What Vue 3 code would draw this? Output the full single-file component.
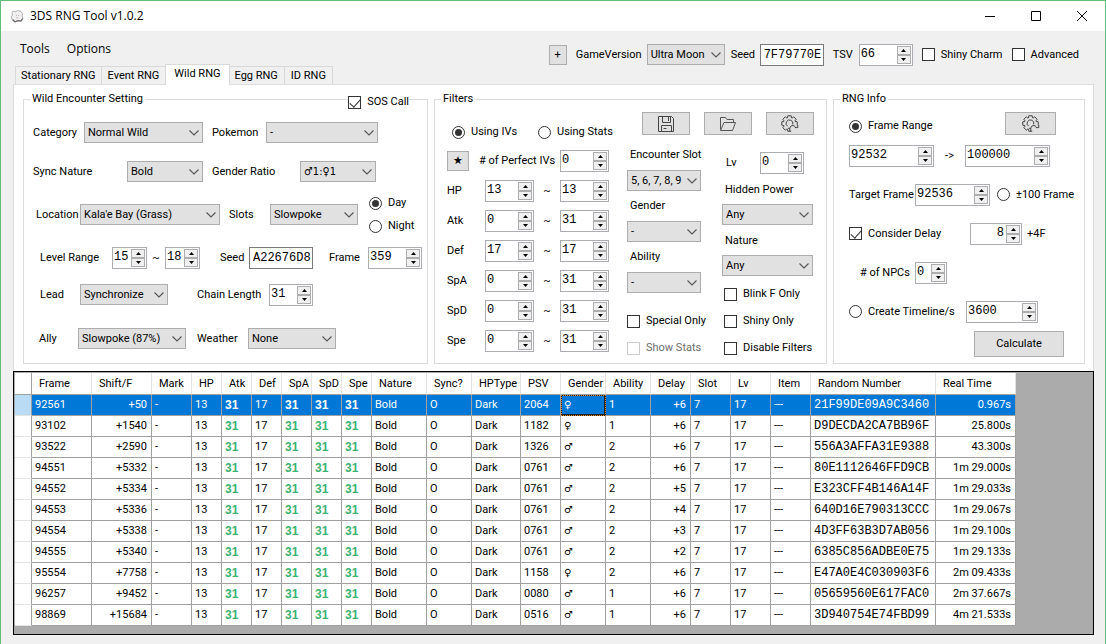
<script setup>
import { h, ref } from 'vue'

const Sel = ({ options, label, id }) =>
  h('span', { class: 'sel' }, [
    h('select', { id, 'aria-label': label }, options.map(o => h('option', o))),
    h('svg', { viewBox: '0 0 10 6', width: 10, height: 6, 'aria-hidden': 'true' }, [
      h('path', { d: 'M0.5 0.5 L5 5 L9.5 0.5', fill: 'none', stroke: '#555', 'stroke-width': 1.1 })
    ])
  ])
Sel.props = ['options', 'label', 'id']

const arrow = (up) =>
  h('svg', { viewBox: '0 0 5 3', width: 5, height: 3, 'aria-hidden': 'true' }, [
    h('path', { d: up ? 'M0 3 L2.5 0 L5 3Z' : 'M0 0 L2.5 3 L5 0Z', fill: '#000' })
  ])

const Spin = ({ value, label, id, end }) =>
  h('span', { class: ['spin', { end }] }, [
    h('input', { type: 'text', inputmode: 'numeric', value, id, 'aria-label': label }),
    h('span', { class: 'steps' }, [
      h('button', { type: 'button', tabindex: -1, 'aria-label': 'Increase ' + label }, [arrow(true)]),
      h('button', { type: 'button', tabindex: -1, 'aria-label': 'Decrease ' + label }, [arrow(false)])
    ])
  ])
Spin.props = ['value', 'label', 'id', 'end']

const gearPath = (() => {
  const pts = []
  for (let i = 0; i < 8; i++) {
    const a = (i * Math.PI) / 4
    for (const [r, d] of [[6, -0.34], [7.9, -0.22], [7.9, 0.22], [6, 0.34]]) {
      pts.push((8.5 + r * Math.sin(a + d)).toFixed(2) + ' ' + (8.5 - r * Math.cos(a + d)).toFixed(2))
    }
  }
  return 'M' + pts.slice(0, 11).join(' L') + ' M' + pts.slice(17).join(' L') + ' L' + pts[0]
})()

const Gear = () =>
  h('svg', { viewBox: '0 0 18 18', width: 18, height: 18, fill: 'none', stroke: '#444', 'stroke-width': 1, 'aria-hidden': 'true' }, [
    h('path', { d: gearPath }),
    h('path', { d: 'M6.6 11.2 A3.4 3.4 0 1 1 11.7 9.4' }),
    h('path', { d: 'M8.8 16.6 V13.4 A3 3 0 0 1 14.4 12 M16.8 10 V12.6 H13.8 M8.8 13.6 L7 13.2' })
  ])

const tabs = ['Stationary RNG', 'Event RNG', 'Wild RNG', 'Egg RNG', 'ID RNG']
const activeTab = ref('Wild RNG')

const stats = [
  ['HP', 13, 13],
  ['Atk', 0, 31],
  ['Def', 17, 17],
  ['SpA', 0, 31],
  ['SpD', 0, 31],
  ['Spe', 0, 31]
]

const columns = [
  ['Frame', 60], ['Shift/F', 60, 'num'], ['Mark', 40], ['HP', 30], ['Atk', 30, 'best'], ['Def', 30],
  ['SpA', 30, 'best'], ['SpD', 30, 'best'], ['Spe', 30, 'best'], ['Nature', 55], ['Sync?', 45],
  ['HPType', 49], ['PSV', 40], ['Gender', 45, 'sex'], ['Ability', 45], ['Delay', 40, 'num'], ['Slot', 40],
  ['Lv', 40], ['Item', 40], ['Random Number', 125, 'hex'], ['Real Time', 80, 'num']
]

const results = [
  ['92561', '+50', '2064', '♀', 1, '+6', '21F99DE09A9C3460', '0.967s'],
  ['93102', '+1540', '1182', '♀', 1, '+6', 'D9DECDA2CA7BB96F', '25.800s'],
  ['93522', '+2590', '1326', '♂', 2, '+6', '556A3AFFA31E9388', '43.300s'],
  ['94551', '+5332', '0761', '♂', 2, '+6', '80E1112646FFD9CB', '1m 29.000s'],
  ['94552', '+5334', '0761', '♂', 2, '+5', 'E323CFF4B146A14F', '1m 29.033s'],
  ['94553', '+5336', '0761', '♂', 2, '+4', '640D16E790313CCC', '1m 29.067s'],
  ['94554', '+5338', '0761', '♂', 2, '+3', '4D3FF63B3D7AB056', '1m 29.100s'],
  ['94555', '+5340', '0761', '♂', 2, '+2', '6385C856ADBE0E75', '1m 29.133s'],
  ['95554', '+7758', '1158', '♀', 2, '+6', 'E47A0E4C030903F6', '2m 09.433s'],
  ['96257', '+9452', '0080', '♂', 1, '+6', '05659560E617FAC0', '2m 37.667s'],
  ['98869', '+15684', '0516', '♂', 1, '+6', '3D940754E74FBD99', '4m 21.533s']
]
const rows = results.map(([frame, shift, psv, sex, ability, delay, rand, time]) => [
  frame, shift, '-', 13, 31, 17, 31, 31, 31, 'Bold', 'O', 'Dark', psv, sex, ability, delay, 7, 17, '---', rand, time
])
</script>

<template>
  <div class="window">
    <header class="titlebar">
      <svg class="logo" viewBox="0 0 14 14" width="14" height="14" aria-hidden="true">
        <path d="M3 2 L5 3 L8 1.5 L11 2.5 L12.5 5 L12 7 L13 9 L11 12 L8 11.5 L5 13 L2.5 11 L1 8 L2.5 6 L2 4Z" fill="#f1f1f1" stroke="#b5b5b5" stroke-width="1" />
        <path d="M2.5 10.5 L5 12.8 L8 11.6 L11 12 L12.6 9.5" fill="none" stroke="#6f6a6a" stroke-width="1.2" />
        <path d="M6 6.5 H7 M8 6.5 H9 M6 8.8 H8.5" stroke="#c8b4b4" stroke-width="1" />
      </svg>
      <h1>3DS RNG Tool v1.0.2</h1>
      <div class="caption">
        <button type="button" aria-label="Minimize"><svg viewBox="0 0 10 10" width="10" height="10"><path d="M0 5.5H10" stroke="#000" /></svg></button>
        <button type="button" aria-label="Maximize"><svg viewBox="0 0 10 10" width="10" height="10"><path d="M.5 .5H9.5V9.5H.5Z" fill="none" stroke="#000" /></svg></button>
        <button type="button" aria-label="Close"><svg viewBox="0 0 10 10" width="10" height="10"><path d="M0 0L10 10M10 0L0 10" stroke="#000" /></svg></button>
      </div>
    </header>

    <div class="top">
      <div class="nav">
        <nav class="menu">
          <button type="button">Tools</button>
          <button type="button">Options</button>
        </nav>
        <div class="tabs" role="tablist">
          <button
            v-for="t in tabs" :key="t" type="button" role="tab"
            :aria-selected="t === activeTab" :class="{ active: t === activeTab }"
            @click="activeTab = t"
          >{{ t }}</button>
        </div>
      </div>
      <div class="toolbar">
        <button type="button" class="btn plus" aria-label="Add">+</button>
        <label class="pair version">GameVersion <Sel label="Game version" :options="['Ultra Moon']" /></label>
        <label class="pair gseed">Seed <input class="hex-input" type="text" value="7F79770E"></label>
        <label class="pair tsv">TSV <Spin label="TSV" value="66" /></label>
        <label class="tick"><input type="checkbox">Shiny Charm</label>
        <label class="tick"><input type="checkbox">Advanced</label>
      </div>
    </div>

    <main class="page">
      <fieldset class="wild">
        <legend>Wild Encounter Setting</legend>
        <label class="tick sos"><input type="checkbox" checked>SOS Call</label>
        <div class="row r1">
          <label class="pair category">Category <Sel label="Category" :options="['Normal Wild']" /></label>
          <label class="pair pokemon">Pokemon <Sel label="Pokemon" :options="['-']" /></label>
        </div>
        <div class="row r2">
          <label class="pair sync">Sync Nature <Sel label="Sync nature" :options="['Bold']" /></label>
          <label class="pair ratio">Gender Ratio <Sel label="Gender ratio" :options="['♂1:♀1']" /></label>
        </div>
        <div class="row r3">
          <label class="pair location">Location <Sel label="Location" :options="['Kala\'e Bay (Grass)']" /></label>
          <label class="pair slots">Slots <Sel label="Slots" :options="['Slowpoke']" /></label>
          <div class="daynight">
            <label class="tick"><input type="radio" name="time" checked>Day</label>
            <label class="tick"><input type="radio" name="time">Night</label>
          </div>
        </div>
        <div class="row r4">
          <div class="pair level">
            <label for="lv-min">Level Range</label>
            <Spin id="lv-min" label="Minimum level" value="15" />
            <span class="to">~</span>
            <Spin label="Maximum level" value="18" />
          </div>
          <label class="pair wseed">Seed <input class="hex-input" type="text" value="A22676D8"></label>
          <label class="pair wframe">Frame <Spin label="Frame" value="359" /></label>
        </div>
        <div class="row r5">
          <label class="pair lead">Lead <Sel label="Lead" :options="['Synchronize']" /></label>
          <label class="pair chain">Chain Length <Spin label="Chain length" value="31" /></label>
        </div>
        <div class="row r6">
          <label class="pair ally">Ally <Sel label="Ally" :options="['Slowpoke (87%)']" /></label>
          <label class="pair weather">Weather <Sel label="Weather" :options="['None']" /></label>
        </div>
      </fieldset>

      <fieldset class="filters">
        <legend>Filters</legend>
        <div class="ivs">
          <div class="modes">
            <label class="tick"><input type="radio" name="mode" checked>Using IVs</label>
            <label class="tick"><input type="radio" name="mode">Using Stats</label>
          </div>
          <div class="perfect">
            <button type="button" class="btn star" aria-label="Favourite">★</button>
            <label for="perfect"># of Perfect IVs</label>
            <Spin id="perfect" label="Number of perfect IVs" value="0" />
          </div>
          <div v-for="[name, lo, hi] in stats" :key="name" class="stat">
            <label :for="'min-' + name">{{ name }}</label>
            <Spin :id="'min-' + name" :label="name + ' minimum'" :value="lo" />
            <span class="to">~</span>
            <Spin :label="name + ' maximum'" :value="hi" />
          </div>
        </div>
        <div class="more">
          <div class="files">
            <button type="button" class="btn" aria-label="Save filters">
              <svg viewBox="0 0 18 18" width="18" height="18" fill="none" stroke="#444" aria-hidden="true">
                <path d="M1.5 1.5H14.5L16.5 3.5V16.5H1.5ZM5.5 1.5V7.5H13.5V1.5M11.5 2V6M4.5 16.5V10.5H14.5V16.5M6.5 13.5H9.5" />
              </svg>
            </button>
            <button type="button" class="btn" aria-label="Open filters">
              <svg viewBox="0 0 18 18" width="18" height="18" fill="none" stroke="#555" aria-hidden="true">
                <path d="M1.5 14.5V2.5H6.5L8 4.5H14.5V7.5M1.5 15.5L5 7.5H16.5L13.5 15.5Z" />
              </svg>
            </button>
            <button type="button" class="btn" aria-label="Reset filters"><Gear /></button>
          </div>
          <div class="choices">
            <div class="stack mid">
              <label class="over">Encounter Slot <Sel label="Encounter slot" :options="['5, 6, 7, 8, 9']" /></label>
              <label class="over">Gender <Sel label="Gender" :options="['-']" /></label>
              <label class="over">Ability <Sel label="Ability" :options="['-']" /></label>
              <div class="checks">
                <label class="tick"><input type="checkbox">Special Only</label>
                <label class="tick off"><input type="checkbox" disabled>Show Stats</label>
              </div>
            </div>
            <div class="stack side">
              <label class="pair lv">Lv <Spin label="Level" value="0" /></label>
              <label class="over">Hidden Power <Sel label="Hidden power" :options="['Any']" /></label>
              <label class="over">Nature <Sel label="Nature" :options="['Any']" /></label>
              <div class="checks">
                <label class="tick"><input type="checkbox">Blink F Only</label>
                <label class="tick"><input type="checkbox">Shiny Only</label>
                <label class="tick"><input type="checkbox">Disable Filters</label>
              </div>
            </div>
          </div>
        </div>
      </fieldset>

      <fieldset class="info">
        <legend>RNG Info</legend>
        <div class="line head">
          <label class="tick"><input type="radio" name="range" checked>Frame Range</label>
          <button type="button" class="btn" aria-label="Range settings"><Gear /></button>
        </div>
        <div class="line range">
          <Spin label="First frame" value="92532" />
          <span class="to">-&gt;</span>
          <Spin label="Last frame" value="100000" />
        </div>
        <div class="line">
          <label class="pair target">Target Frame <Spin label="Target frame" value="92536" /></label>
          <label class="tick"><input type="radio" name="range">±100 Frame</label>
        </div>
        <div class="line delay">
          <label class="tick"><input type="checkbox" checked>Consider Delay</label>
          <Spin label="Delay" value="8" :end="true" />
          <span>+4F</span>
        </div>
        <div class="line">
          <label class="pair npcs"># of NPCs <Spin label="Number of NPCs" value="0" /></label>
        </div>
        <div class="line timeline">
          <label class="tick"><input type="radio" name="range">Create Timeline/s</label>
          <Spin label="Timeline seconds" value="3600" />
        </div>
        <button type="button" class="btn calc">Calculate</button>
      </fieldset>
    </main>

    <section class="grid">
      <table>
        <colgroup>
          <col class="rowhead">
          <col v-for="c in columns" :key="c[0]" :style="{ width: c[1] + 'px' }">
        </colgroup>
        <thead>
          <tr>
            <th></th>
            <th v-for="c in columns" :key="c[0]" scope="col">{{ c[0] }}</th>
          </tr>
        </thead>
        <tbody>
          <tr v-for="(r, i) in rows" :key="r[0]" :class="{ picked: i === 0 }">
            <td class="handle"></td>
            <td v-for="(v, j) in r" :key="j" :class="columns[j][2]">{{ v }}</td>
          </tr>
        </tbody>
      </table>
    </section>
  </div>
</template>

<style>
body { background: #f0f0f0; }
</style>

<style scoped>
.window {
  box-sizing: border-box;
  min-height: 100vh;
  display: flex;
  flex-direction: column;
  border: 1px solid #66bd78;
  background: #f0f0f0;
  color: #000;
  font: 11px/16px Roboto, "Liberation Sans", sans-serif;
}
.window :deep(*) { box-sizing: border-box; }
.window :deep(button), .window :deep(input), .window :deep(select) {
  font: inherit;
  color: inherit;
  margin: 0;
}
.window :deep(svg) { display: block; }

.titlebar {
  display: flex;
  align-items: center;
  height: 30px;
  padding-left: 9px;
  background: #fff;
}
.titlebar h1 {
  margin: 0 auto 0 6px;
  font: 12px/16px "Open Sans", "Noto Sans", sans-serif;
}
.caption { display: flex; }
.caption button {
  display: grid;
  place-items: center;
  width: 46px;
  height: 28px;
  padding: 0;
  border: 0;
  background: none;
}

.top {
  display: flex;
  justify-content: space-between;
  height: 53px;
}
.nav { display: flex; flex-direction: column; justify-content: space-between; }
.menu { display: flex; gap: 17px; padding: 10px 0 0 19px; }
.window .menu button {
  padding: 0;
  border: 0;
  background: none;
  font: 12px/16px "Open Sans", "Noto Sans", sans-serif;
}
.tabs { display: flex; align-items: flex-end; padding-left: 14px; }
.tabs button {
  position: relative;
  height: 18px;
  padding: 0 6px;
  border: 1px solid #d9d9d9;
  border-bottom: 0;
  border-left-width: 0;
  background: #f0f0f0;
  line-height: 18px;
  white-space: nowrap;
}
.tabs button:first-child { padding: 0 5px; border-left-width: 1px; }
.window .tabs button.active {
  z-index: 1;
  height: 21px;
  margin: 0 -1px -1px -1px;
  padding: 0 8px 3px;
  border-left-width: 1px;
  background: #fff;
}
.toolbar {
  display: flex;
  align-items: center;
  gap: 9px;
  height: 47px;
  padding-right: 26px;
  white-space: nowrap;
}
.toolbar .gseed { margin-left: -3px; }

.btn {
  display: grid;
  place-items: center;
  padding: 0;
  border: 1px solid #adadad;
  background: #e1e1e1;
}
.plus { width: 18px; height: 20px; }
.star { width: 22px; height: 20px; }

.window :deep(.sel) {
  position: relative;
  display: block;
  height: 21px;
}
.window :deep(.sel select) {
  display: block;
  width: 100%;
  height: 21px;
  padding: 0 18px 0 3px;
  border: 1px solid #adadad;
  border-radius: 0;
  background: #e1e1e1;
  appearance: none;
  text-indent: 0;
  text-overflow: clip;
}
.window :deep(.sel svg) {
  position: absolute;
  top: 8px;
  right: 4px;
  pointer-events: none;
}
.window :deep(.spin) {
  display: flex;
  height: 22px;
  padding: 1px;
  border: 1px solid #abadb3;
  background: #fff;
}
.window :deep(.spin input) {
  flex: 1;
  width: 0;
  min-width: 0;
  height: 16px;
  padding: 0;
  border: 0;
  background: none;
  outline: 0;
  font: 12px/16px "Liberation Mono", monospace;
}
.window :deep(.spin.end input) { padding-right: 2px; text-align: right; }
.window :deep(.steps) {
  display: grid;
  width: 14px;
  flex: none;
}
.window :deep(.steps button) {
  display: grid;
  place-items: center;
  padding: 0;
  border: 1px solid #adadad;
  background: #f0f0f0;
}
.window .hex-input {
  width: 64px;
  height: 22px;
  padding: 0 0 0 3px;
  border: 1px solid #7a7a7a;
  background: #fff;
  font: 12px/16px "Liberation Mono", monospace;
}

.tick {
  display: flex;
  align-items: center;
  gap: 6px;
  white-space: nowrap;
}
.tick input {
  display: grid;
  place-items: center;
  flex: none;
  width: 13px;
  height: 13px;
  border: 1px solid #333;
  background: #fff;
  appearance: none;
}
.tick input[type="radio"] { border-radius: 50%; }
.tick input[type="radio"]:checked::after {
  content: "";
  width: 7px;
  height: 7px;
  border-radius: 50%;
  background: #333;
}
.tick input[type="checkbox"]:checked::after {
  content: "";
  width: 5px;
  height: 9px;
  margin-bottom: 3px;
  border: solid #333;
  border-width: 0 1px 1px 0;
  transform: rotate(42deg);
}
.tick.off { color: #6d6d6d; }
.tick.off input { border-color: #ccc; }

.pair {
  display: grid;
  align-items: center;
  white-space: nowrap;
}
.to { text-align: center; }
.version { grid-template-columns: 71px 78px; }
.gseed { grid-template-columns: 29px 64px; }
.tsv { grid-template-columns: 26px 54px; }
.category { grid-template-columns: 51px 119px; }
.pokemon { grid-template-columns: 54px 112px; }
.sync { grid-template-columns: 94px 76px; }
.ratio { grid-template-columns: 88px 76px; }
.window .ratio :deep(select) { font-family: "DejaVu Sans Condensed", "DejaVu Sans", sans-serif; }
.location { grid-template-columns: 44px 140px; }
.slots { grid-template-columns: 41px 88px; }
.level { grid-template-columns: 72px 35px 18px 35px; }
.wseed { grid-template-columns: 29px 64px; }
.wframe { grid-template-columns: 39px 54px; }
.lead { grid-template-columns: 40px 88px; }
.chain { grid-template-columns: 72px 44px; }
.ally { grid-template-columns: 39px 108px; }
.weather { grid-template-columns: 51px 88px; }
.lv { grid-template-columns: 34px 44px; }
.target { grid-template-columns: 66px 75px; }
.npcs { grid-template-columns: 55px 32px; }

.page {
  display: grid;
  grid-template-columns: 405fr 393fr 252fr;
  gap: 6px;
  margin: 0 11px 0 12px;
  padding: 6px 8px 7px 9px;
  border: 1px solid #dcdcdc;
  border-bottom: 0;
  background: #fff;
}
fieldset {
  position: relative;
  min-width: 0;
  margin: 0;
  padding: 0;
  border: 1px solid #dcdcdc;
}
legend { padding: 0 2px; }

.wild {
  display: grid;
  grid-template-rows: 39px 43px 43px 37px 44px 21px;
  padding: 15px 0 14px 9px;
}
.wild legend { margin-left: -3px; }
.sos {
  position: absolute;
  top: -13px;
  right: 18px;
  background: #fff;
}
.row {
  display: flex;
  align-items: center;
  gap: 9px;
  height: 21px;
}
.r3 { padding-left: 3px; }
.r4 { padding-left: 7px; gap: 16px; }
.r4 .level { margin-right: 4px; }
.r5 { padding-left: 7px; gap: 29px; }
.r6 { padding-left: 6px; gap: 11px; }
.daynight { display: grid; gap: 7px; padding-left: 2px; }

.filters {
  display: flex;
  justify-content: space-between;
  padding: 5px 12px 6px 12px;
}
.filters legend { margin-left: -6px; }
.ivs { display: grid; width: 162px; align-content: start; gap: 8px; padding-top: 10px; }
.modes { display: grid; grid-template-columns: 86px 76px; padding: 2px 0 2px 5px; }
.perfect { display: grid; grid-template-columns: 32px 81px 49px; align-items: center; }
.stat { display: grid; grid-template-columns: 38px 49px 26px 49px; align-items: center; }
.perfect label, .stat label { white-space: nowrap; }
.more { width: 187px; }
.files { display: flex; gap: 14px; padding-left: 15px; }
.files .btn { width: 48px; height: 23px; }
.choices { display: flex; justify-content: space-between; padding-right: 1px; }
.stack { display: grid; grid-template-columns: minmax(0, 1fr); align-content: start; white-space: nowrap; }
.mid { width: 74px; gap: 7px; padding-top: 12px; }
.side { width: 89px; gap: 8px; padding-top: 17px; }
.side { width: 91px; }
.over { display: grid; grid-template-columns: minmax(0, 1fr); gap: 6px; text-indent: 3px; }
.mid .over { gap: 7px; }
.checks { display: grid; gap: 11px; }
.mid .checks { padding-top: 13px; }
.side .checks { padding: 2px 0 0 2px; }
.lv { padding-left: 4px; }

.info {
  display: grid;
  grid-template-columns: minmax(0, 1fr);
  align-content: start;
  padding: 5px 20px 6px 15px;
}
.info legend { margin-left: -9px; }
.line { display: flex; align-items: center; gap: 7px; height: 39px; white-space: nowrap; }
.head { align-items: flex-start; justify-content: space-between; height: 24px; padding-right: 8px; }
.head .tick { padding-top: 6px; }
.head .btn { width: 51px; height: 23px; }
.range { display: grid; grid-template-columns: 85px 31px 85px; gap: 0; }
.delay { display: grid; grid-template-columns: 121px 52px 1fr; gap: 0; }
.delay span:last-child { padding-left: 5px; }
.npcs { padding-left: 11px; }
.timeline { display: grid; grid-template-columns: 117px 72px; gap: 0; }
.calc { width: 90px; height: 26px; justify-self: end; }

.grid {
  flex: 1;
  margin: 0 11px 9px 12px;
  padding: 1px 0 8px 1px;
  border: 1px solid #000;
  background: #ababab;
}
table {
  table-layout: fixed;
  width: 1001px;
  border-collapse: separate;
  border-spacing: 0;
}
.rowhead { width: 17px; }
th, td {
  height: 21px;
  padding: 0 4px 0 3px;
  overflow: hidden;
  border: solid #a0a0a0;
  border-width: 0 1px 1px 0;
  background: #fff;
  font-weight: 400;
  line-height: 16px;
  text-align: left;
  white-space: nowrap;
}
th {
  height: 22px;
  padding: 0 0 0 7px;
  border-right-color: #e3e3e3;
}
th:first-child, .handle { border-right-color: #a0a0a0; }
.handle { border-bottom-color: #e3e3e3; }
.num { text-align: right; }
.best {
  color: #3cb371;
  font: 700 12px/16px "Liberation Sans", sans-serif;
}
.hex { font: 12px/16px "Liberation Mono", monospace; }
.sex { font: 10px/16px "DejaVu Sans", sans-serif; }
.picked td { background: #0078d7; color: #fff; }
.picked .handle { background: #b9dcf4; }
.picked .sex { border-color: #222; box-shadow: inset 0 0 0 1px #222; outline: 1px dotted #ff8728; outline-offset: -1px; }
</style>
